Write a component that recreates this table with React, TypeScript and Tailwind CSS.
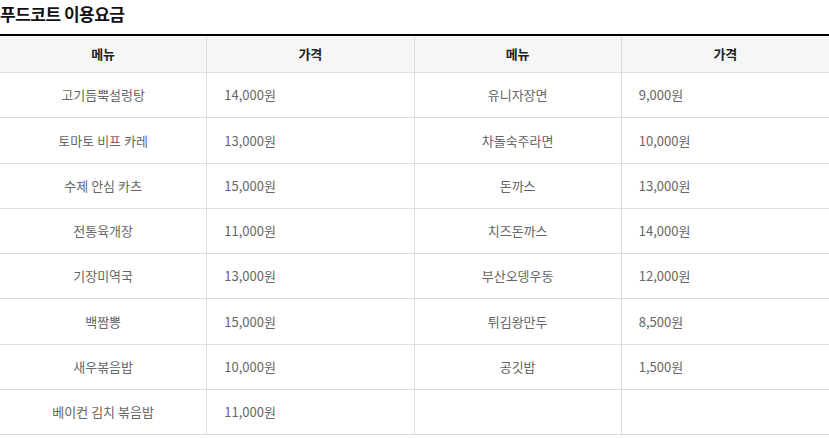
const rows: [string, string, string, string][] = [
  ["고기듬뿍설렁탕", "14,000원", "유니자장면", "9,000원"],
  ["토마토 비프 카레", "13,000원", "차돌숙주라면", "10,000원"],
  ["수제 안심 카츠", "15,000원", "돈까스", "13,000원"],
  ["전통육개장", "11,000원", "치즈돈까스", "14,000원"],
  ["기장미역국", "13,000원", "부산오뎅우동", "12,000원"],
  ["백짬뽕", "15,000원", "튀김왕만두", "8,500원"],
  ["새우볶음밥", "10,000원", "공깃밥", "1,500원"],
  ["베이컨 김치 볶음밥", "11,000원", "", ""],
];

export default function App() {
  return (
    <div
      className="w-[829px] h-[438px] bg-white overflow-hidden"
      style={{ fontFamily: '"Noto Sans CJK KR", "Noto Sans", sans-serif' }}
    >
      <h3 className="h-[34px] pt-[2px] text-[17px] font-bold text-[#111] tracking-[-0.5px] leading-[24px]">
        푸드코트 이용요금
      </h3>
      <div className="border-t-2 border-black">
        {/* header */}
        <div className="grid grid-cols-4 h-[37px] bg-[#f6f6f6] border-b border-[#dddddd]">
          {["메뉴", "가격", "메뉴", "가격"].map((h, i) => (
            <div
              key={i}
              className={`flex items-center justify-center text-[13px] font-bold text-[#222] ${i < 3 ? "border-r border-[#dddddd]" : ""}`}
            >
              {h}
            </div>
          ))}
        </div>
        {rows.map((r, i) => (
          <div key={i} className="grid grid-cols-4 h-[45.25px] border-b border-[#dddddd]">
            <div className="flex items-center justify-center border-r border-[#dddddd] text-[13px] text-[#666]">
              {r[0]}
            </div>
            <div className="flex items-center pl-[17px] border-r border-[#dddddd] text-[13px] text-[#666]">
              {r[1]}
            </div>
            <div className="flex items-center justify-center border-r border-[#dddddd] text-[13px] text-[#666]">
              {r[2]}
            </div>
            <div className="flex items-center pl-[17px] text-[13px] text-[#666]">{r[3]}</div>
          </div>
        ))}
      </div>
    </div>
  );
}
